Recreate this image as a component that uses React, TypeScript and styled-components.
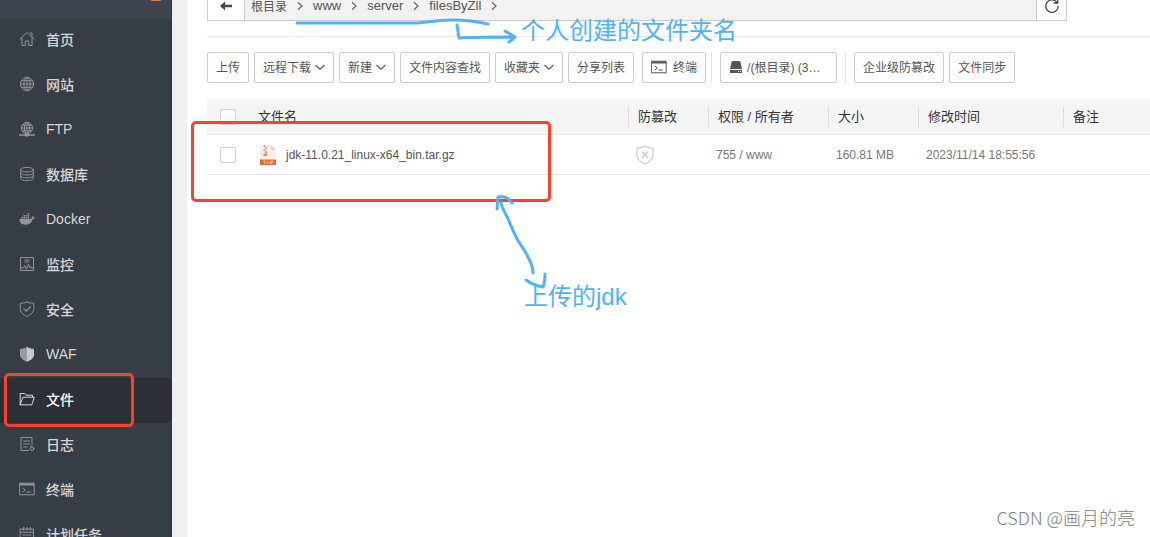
import React from "react";
import styled, { createGlobalStyle } from "styled-components";

const GlobalStyle = createGlobalStyle`
  *, *::before, *::after { box-sizing: border-box; }
  html, body, #root { height: 100%; }
  body {
    margin: 0;
    overflow: hidden;
    background: #fff;
    font-family: "Liberation Sans", "Noto Sans CJK SC", sans-serif;
    font-size: 12px;
    color: #555;
  }
  button { font: inherit; color: inherit; }
  a { color: inherit; text-decoration: none; }
`;

const BLUE = "#50b2fb";
const RED = "#f3452b";

const Page = styled.div`
  position: relative;
  display: flex;
  height: 100%;
  overflow: hidden;
`;

/* ---------- sidebar ---------- */

const Sidebar = styled.aside`
  flex: 0 0 172px;
  background: #373d44;
  border-right: 1px solid #30353c;
`;

const SidebarHead = styled.div`
  display: flex;
  justify-content: flex-end;
  height: 18px;
  padding-right: 8px;
  overflow: hidden;
  background: #3e444d;
`;

const MessageBadge = styled.span`
  width: 14px;
  height: 14px;
  margin-top: -13px;
  border-radius: 4px;
  background: #d97f4e;
`;

const NavList = styled.ul`
  margin: 0;
  padding: 0;
  list-style: none;
`;

const NavItem = styled.li`
  position: relative;
`;

const NavLink = styled.a<{ $active?: boolean }>`
  display: flex;
  align-items: center;
  gap: 11px;
  height: 45px;
  padding: 0 0 3px 19px;
  font-size: 14px;
  font-weight: 500;
  color: ${(p) => (p.$active ? "#fff" : "#d6d8da")};
  background: ${(p) => (p.$active ? "#2c2f35" : "transparent")};

  svg {
    flex: none;
    color: ${(p) => (p.$active ? "#d8d9da" : "#92969a")};
  }
`;

const Gutter = styled.div`
  flex: 0 0 15px;
  background: #f0f0f0;
`;

/* ---------- main ---------- */

const Main = styled.main`
  flex: 1;
  min-width: 0;
  padding-left: 20px;
`;

const PathBar = styled.nav`
  display: flex;
  height: 31px;
  margin: -10px 83px 0 0;
  border: 1px solid #ccc;
  background: #f2f2f2;
`;

const PathButton = styled.button<{ $side: "left" | "right" }>`
  display: flex;
  align-items: center;
  justify-content: center;
  width: ${(p) => (p.$side === "left" ? 37 : 30)}px;
  padding: 0;
  border: 0 solid #ccc;
  border-${(p) => (p.$side === "left" ? "right" : "left")}-width: 1px;
  background: #fff;
`;

const Crumbs = styled.ol`
  flex: 1;
  display: flex;
  align-items: center;
  margin: 0;
  padding: 0 0 0 6px;
  list-style: none;
`;

const Crumb = styled.li<{ $root?: boolean }>`
  display: flex;
  align-items: center;
  font-size: ${(p) => (p.$root ? 12 : 13)}px;

  svg { margin: 0 10px; }
`;

const Toolbar = styled.div`
  display: flex;
  gap: 5px;
  margin-top: 15px;
  padding: 15px 0 16px;
  border-top: 1px solid #ebebeb;
`;

const ToolButton = styled.button<{ $wide?: boolean; $gap?: number }>`
  display: flex;
  align-items: center;
  gap: ${(p) => p.$gap ?? 4}px;
  flex: none;
  width: ${(p) => (p.$wide ? "117px" : "auto")};
  height: 31px;
  padding: 0 8px 2px;
  border: 1px solid #ccc;
  border-radius: 2px;
  background: #fff;
  white-space: nowrap;
`;

const ToolGroup = styled.div`
  display: flex;
  gap: 5px;
  margin-left: 3px;
`;

const ToolSeparator = styled.span`
  width: 1px;
  height: 31px;
  background: #e6e6e6;
`;

const FileTable = styled.table`
  width: 100%;
  table-layout: fixed;
  border-collapse: separate;
  border-spacing: 0;
  text-align: left;
`;

const HeadCell = styled.th`
  height: 36px;
  padding: 0;
  border-bottom: 1px solid #e8e8e8;
  background: #f5f5f5;
  font-size: 13px;
  font-weight: 400;
  color: #333;
`;

const HeadLabel = styled.div<{ $divided?: boolean }>`
  height: 20px;
  padding-left: 9px;
  border-left: 1px solid ${(p) => (p.$divided ? "#ddd" : "transparent")};
  line-height: 20px;
  white-space: nowrap;
`;

const Cell = styled.td`
  height: 40px;
  padding: 0 8px;
  border-bottom: 1px solid #e8e8e8;
  color: #777;
  white-space: nowrap;

  svg { display: block; }
`;

const CheckCell = styled(Cell)`
  padding: 0 0 0 13px;
`;

const FileName = styled.a`
  display: flex;
  align-items: center;
  gap: 8px;
  padding-left: 2px;
  color: #555;
`;

const Check = styled.input`
  appearance: none;
  display: block;
  width: 16px;
  height: 16px;
  margin: 0;
  border: 1px solid #d2d2d2;
  border-radius: 2px;
  background: #fff;
`;

const HeadCheck = styled(Check)`
  margin-left: 13px;
`;

/* ---------- annotations drawn over the page ---------- */

const Frame = styled.div`
  position: absolute;
  border: 3px solid ${RED};
  border-radius: 5px;
  pointer-events: none;
`;

const NavFrame = styled(Frame)`
  z-index: 1;
  top: -5px;
  left: 4px;
  width: 130px;
  height: 54px;
`;

const RowFrame = styled(Frame)`
  top: 121px;
  left: 191px;
  width: 360px;
  height: 81px;
`;

const Ink = styled.svg`
  position: absolute;
  top: 0;
  left: 0;
  pointer-events: none;
`;

const Note = styled.div<{ $x: number; $y: number }>`
  position: absolute;
  left: ${(p) => p.$x}px;
  top: ${(p) => p.$y}px;
  font-size: 24px;
  line-height: 32px;
  color: ${BLUE};
  white-space: nowrap;
`;

const Watermark = styled.div`
  position: absolute;
  right: 15px;
  bottom: 8px;
  font-family: "Noto Sans CJK SC", sans-serif;
  font-size: 18px;
  font-weight: 300;
  line-height: 24px;
  color: #808080;
`;

/* ---------- icons ---------- */

const Icon = ({ children }: { children: React.ReactNode }) => (
  <svg width="16" height="16" viewBox="0 0 16 16" fill="none" stroke="currentColor" strokeWidth="1" strokeLinecap="round" strokeLinejoin="round" aria-hidden="true">
    {children}
  </svg>
);

const HomeIcon = () => (
  <Icon>
    <path d="M1 8.200 8 1.500l7 6.700M3 7v7.500h3.300V10h3.400v4.500H13V7M11 2h2v3.200" />
  </Icon>
);
const GlobeIcon = () => (
  <Icon>
    <circle cx="8" cy="8" r="6.600" />
    <ellipse cx="8" cy="8" rx="3.200" ry="6.600" />
    <path d="M8 1.400v13.200M1.400 8h13.200M2.400 4.700h11.200M2.400 11.300h11.200" />
  </Icon>
);
const FtpIcon = () => (
  <Icon>
    <circle cx="8" cy="7" r="5.600" />
    <ellipse cx="8" cy="7" rx="2.700" ry="5.600" />
    <path d="M8 1.400v11.200M2.400 7h11.200M3.300 4.200h9.400M3.300 9.800h9.400" />
    <path d="M.5 14h15" strokeWidth="1.300" />
    <rect x="6.500" y="13.500" width="3" height="1.500" fill="currentColor" />
  </Icon>
);
const DatabaseIcon = () => (
  <Icon>
    <ellipse cx="8" cy="3.700" rx="6.300" ry="2.300" />
    <path d="M1.700 3.700v8.800c0 1.200 2.800 2.200 6.300 2.200s6.300-1 6.300-2.200V3.700M1.700 6.700C1.700 8 4.500 9 8 9s6.300-1 6.300-2.300M1.700 9.700c0 1.200 2.800 2.200 6.300 2.200s6.300-1 6.300-2.200" />
  </Icon>
);
const DockerIcon = () => (
  <Icon>
    <g fill="currentColor" stroke="none">
      <path d="M.5 8h11.200c.8 0 1.200-.5 1.100-1.400-.1-.7.1-1.400.6-1.900.7.500 1 1.100 1 1.800.6-.2 1.200-.1 1.700.3-.4.9-1.200 1.300-2.300 1.300-1.100 3.800-3.300 5.600-7 5.600C2.700 13.700.5 12 .5 8Z" />
      <path d="M2.300 5.900h1.600v1.500H2.300zM4.400 5.900H6v1.500H4.400zM6.500 5.900h1.600v1.500H6.500zM8.600 5.900h1.600v1.500H8.600zM4.400 3.900H6v1.500H4.400zM6.500 3.900h1.600v1.500H6.500zM8.600 3.900h1.600v1.500H8.600zM8.600 1.900h1.600v1.500H8.600z" />
    </g>
  </Icon>
);
const MonitorIcon = () => (
  <Icon>
    <path d="M1.500 1.500h13v13h-13zM5.500 4h5M5.500 6h5M2 12h2.500l1.300-2.500 1.700 3.700 2-5 1.300 3.600 1-1.300 1 1.500h1.500" strokeLinecap="butt" />
  </Icon>
);
const ShieldCheckIcon = () => (
  <Icon>
    <path d="M8 .8c1.900 1 4.200 1.500 6.800 1.500v5.300c0 3.400-2.500 6-6.800 7.800-4.300-1.800-6.800-4.400-6.800-7.800V2.300C3.800 2.300 6.100 1.800 8 .8Z" />
    <path d="m4.800 7.600 2.500 2.500 4.200-4.500" strokeWidth="1.300" />
  </Icon>
);
const WafIcon = () => (
  <Icon>
    <g stroke="none">
      <path d="M8 .5v15.300C4.300 14.200 1 12.200 1 8.700V3.200l1.700-.8.600.8 1.700-1.700.7.900L8 .5Z" fill="#9a9da0" />
      <path d="M8 .5v15.300c3.700-1.600 7-3.600 7-7.100V3.200l-1.700-.8-.6.8-1.700-1.700-.7.900L8 .5Z" fill="#c6c8ca" />
    </g>
  </Icon>
);
const FolderIcon = () => (
  <Icon>
    <path d="M1.200 13.500v-11h4.600l1.400 1.700h6.300v2M1.200 13.500 4 6.200h11.300l-2.400 7.300Z" />
  </Icon>
);
const LogIcon = () => (
  <Icon>
    <path d="M13 9V1.500H2v13h7.500M4.500 5h6M4.500 8h6M4.500 11h3.500" />
    <circle cx="13" cy="12.700" r="1.800" />
    <path d="m11.400 9.800 1.300.9" />
  </Icon>
);
const TerminalIcon = () => (
  <Icon>
    <path d="M.8 2.200h14.400v11.600H.8zM4 7.200 6.300 9 4 10.800M7.800 11h3.500" strokeLinejoin="miter" />
    <path d="M1 3.500h14" strokeWidth="2" strokeLinecap="butt" />
  </Icon>
);
const CalendarIcon = () => (
  <Icon>
    <path d="M1.500 3h13v11.500h-13zM1.500 6.300h13M4.700 1.300v3M8 1.300v3M11.300 1.300v3M4 9h2M7 9h2M10 9h2M4 12h2M7 12h2M10 12h2" />
  </Icon>
);
const ChevronDown = () => (
  <svg width="10" height="10" viewBox="0 0 10 10" fill="none" stroke="#555" strokeWidth="1.200" aria-hidden="true">
    <path d="m.5 3 4.500 4.200L9.500 3" />
  </svg>
);
const ChevronRight = () => (
  <svg width="6" height="10" viewBox="0 0 6 10" fill="none" stroke="#666" strokeWidth="1.200" aria-hidden="true">
    <path d="m1 1.200 4 3.800-4 3.800" />
  </svg>
);
const BackIcon = () => (
  <svg width="12" height="10" viewBox="0 0 12 10" fill="#444" aria-hidden="true">
    <path d="M0 5 5 .5v3.300h7v2.400H5v3.300Z" />
  </svg>
);
const RefreshIcon = () => (
  <svg width="16" height="16" viewBox="0 0 16 16" fill="none" stroke="#444" strokeWidth="1.300" aria-hidden="true">
    <path d="M13 4.500A6.200 6.200 0 1 0 14.200 8M13.700 1v4h-4" />
  </svg>
);
const DiskIcon = () => (
  <svg width="14" height="14" viewBox="0 0 14 14" fill="#555" aria-hidden="true">
    <path d="M3.800 1h6.400c.6 0 1 .3 1.200.9L13 9H1l1.600-7.100c.2-.6.6-.9 1.200-.9Z" />
    <path d="M1 10h12v3H1z" />
    <path d="M9 11.500h1M11 11.500h1" stroke="#fff" />
  </svg>
);
const ShieldXIcon = () => (
  <svg width="18" height="20" viewBox="0 0 18 20" fill="none" stroke="#ccc" strokeWidth="1.200" aria-hidden="true">
    <path d="M9 1c2.200 1.400 4.700 2.200 8 2.400v6.300c0 4-2.800 7-8 9.300-5.200-2.300-8-5.300-8-9.300V3.400C4.300 3.200 6.800 2.400 9 1ZM6 6.500l6 6.500M12 6.500 6 13" />
  </svg>
);
const ArchiveIcon = () => (
  <svg width="20" height="22" viewBox="0 0 20 22" aria-hidden="true">
    <path d="M2 1h11l5 5v10H2Z" fill="#f6eeea" />
    <path d="M13 1v5h5Z" fill="#dcd3ce" />
    <path d="M5.500 1.500h2v1.500h-2zM7 3.500h2V5H7zM5.500 5.500h2V7h-2zM7 7.500h2V9H7zM5.500 9.500H9v2.500H5.500z" fill="#e58a5f" />
    <path d="M2 15.500h16V21H2z" fill="#df6b3b" />
    <path d="M5 17h3M6.500 17v3M8.700 20l1.300-3 1.300 3M12.700 20v-3h2v1.500h-2l2 1.500" stroke="#f7cdb9" strokeWidth=".7" fill="none" />
  </svg>
);

const navItems = [
  { label: "首页", icon: <HomeIcon /> },
  { label: "网站", icon: <GlobeIcon /> },
  { label: "FTP", icon: <FtpIcon /> },
  { label: "数据库", icon: <DatabaseIcon /> },
  { label: "Docker", icon: <DockerIcon /> },
  { label: "监控", icon: <MonitorIcon /> },
  { label: "安全", icon: <ShieldCheckIcon /> },
  { label: "WAF", icon: <WafIcon /> },
  { label: "文件", icon: <FolderIcon />, active: true },
  { label: "日志", icon: <LogIcon /> },
  { label: "终端", icon: <TerminalIcon /> },
  { label: "计划任务", icon: <CalendarIcon /> },
];

const path = ["根目录", "www", "server", "filesByZll"];
const columns = ["防篡改", "权限 / 所有者", "大小", "修改时间", "备注"];

export default function App() {
  return (
    <Page>
      <GlobalStyle />
      <Sidebar>
        <SidebarHead>
          <MessageBadge />
        </SidebarHead>
        <NavList>
          {navItems.map((item) => (
            <NavItem key={item.label}>
              <NavLink href="#" $active={item.active}>
                {item.icon}
                {item.label}
              </NavLink>
              {item.active && <NavFrame />}
            </NavItem>
          ))}
        </NavList>
      </Sidebar>
      <Gutter />
      <Main>
        <PathBar>
          <PathButton $side="left" aria-label="后退">
            <BackIcon />
          </PathButton>
          <Crumbs>
            {path.map((name, i) => (
              <Crumb key={name} $root={i === 0}>
                <a href="#">{name}</a>
                <ChevronRight />
              </Crumb>
            ))}
          </Crumbs>
          <PathButton $side="right" aria-label="刷新">
            <RefreshIcon />
          </PathButton>
        </PathBar>

        <Toolbar>
          <ToolButton>上传</ToolButton>
          <ToolButton>远程下载<ChevronDown /></ToolButton>
          <ToolButton>新建<ChevronDown /></ToolButton>
          <ToolButton>文件内容查找</ToolButton>
          <ToolButton>收藏夹<ChevronDown /></ToolButton>
          <ToolButton>分享列表</ToolButton>
          <ToolGroup>
            <ToolButton $gap={6}>
              <TerminalIcon />
              终端
            </ToolButton>
            <ToolSeparator />
          </ToolGroup>
          <ToolGroup>
            <ToolButton $wide>
              <DiskIcon />
              /(根目录) (3…
            </ToolButton>
          </ToolGroup>
          <ToolGroup>
            <ToolSeparator />
          </ToolGroup>
          <ToolGroup>
            <ToolButton>企业级防篡改</ToolButton>
            <ToolButton>文件同步</ToolButton>
          </ToolGroup>
        </Toolbar>

        <FileTable>
          <colgroup>
            <col style={{ width: 41 }} />
            <col />
            <col style={{ width: 80 }} />
            <col style={{ width: 120 }} />
            <col style={{ width: 90 }} />
            <col style={{ width: 145 }} />
            <col style={{ width: 87 }} />
          </colgroup>
          <thead>
            <tr>
              <HeadCell>
                <HeadCheck type="checkbox" aria-label="全选" />
              </HeadCell>
              <HeadCell>
                <HeadLabel>文件名</HeadLabel>
              </HeadCell>
              {columns.map((name) => (
                <HeadCell key={name}>
                  <HeadLabel $divided>{name}</HeadLabel>
                </HeadCell>
              ))}
            </tr>
          </thead>
          <tbody>
            <tr>
              <CheckCell>
                <Check type="checkbox" aria-label="jdk-11.0.21_linux-x64_bin.tar.gz" />
              </CheckCell>
              <Cell>
                <FileName href="#">
                  <ArchiveIcon />
                  jdk-11.0.21_linux-x64_bin.tar.gz
                </FileName>
              </Cell>
              <Cell>
                <ShieldXIcon />
              </Cell>
              <Cell>755 / www</Cell>
              <Cell>160.81 MB</Cell>
              <Cell>2023/11/14 18:55:56</Cell>
              <Cell />
            </tr>
          </tbody>
        </FileTable>
      </Main>

      <RowFrame />
      <Ink width="660" height="300" viewBox="0 0 660 300" fill="none" stroke={BLUE} strokeWidth="3" strokeLinecap="round" strokeLinejoin="round" aria-hidden="true">
        <path d="M297 23h115c14 0 22-3 40-3 14 0 23 1 36 4" />
        <path d="M457 25c1 4 1 8 2 13 18-1 36-1 55-1M505 31l10 6-6 5" />
        <path d="M501 203c2 8 6 13 8 18 3 8 5 12 8 18 5 8 9 13 12 20 3 6 4 9 4 14" />
        <path d="M497 209l1-12c7-1 9 0 14 6M526 280c7 5 11 6 17 7 2-5 2-9 2-13" />
      </Ink>
      <Note $x={521} $y={15}>个人创建的文件夹名</Note>
      <Note $x={524} $y={281}>上传的jdk</Note>
      <Watermark>CSDN @画月的亮</Watermark>
    </Page>
  );
}
